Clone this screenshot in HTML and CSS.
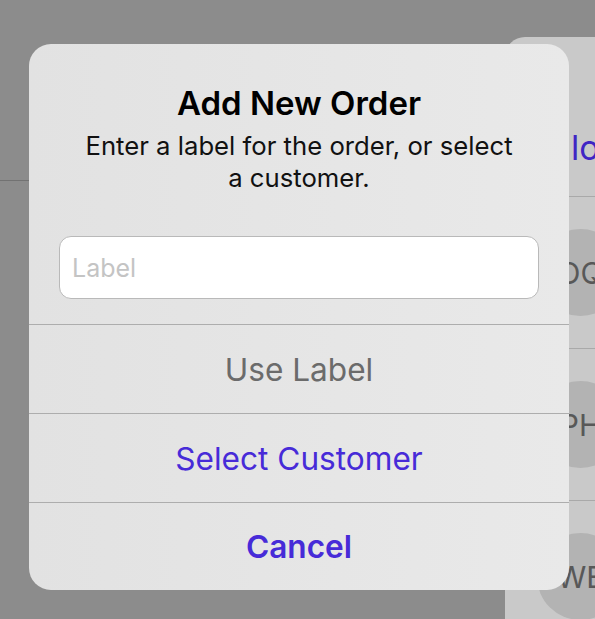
FILE: index.html
```html
<!DOCTYPE html>
<html lang="en">
<head>
  <meta charset="UTF-8" />
  <meta name="viewport" content="width=device-width, initial-scale=1.0"/>
  <title>Add New Order</title>
  <link rel="stylesheet" href="styles.css">
</head>
<body>

  <div class="page">
    <div class="main">
      <div class="main-header"></div>
    </div>

    <div class="side">
      <div class="side-header"><span class="side-title">lo</span></div>
      <div class="side-row"><span class="avatar">OQ</span></div>
      <div class="side-row"><span class="avatar">PH</span></div>
      <div class="side-row"><span class="avatar">WE</span></div>
    </div>
  </div>

  <div class="alert">
    <div class="alert-body">
      <h1 class="alert-title">Add New Order</h1>
      <p class="alert-message">Enter a label for the order, or select a customer.</p>
      <input class="alert-field" type="text" placeholder="Label">
    </div>
    <button class="alert-btn muted">Use Label</button>
    <button class="alert-btn">Select Customer</button>
    <button class="alert-btn bold">Cancel</button>
  </div>

</body>
</html>
```

FILE: styles.css
```css
body { margin: 0; width: 595px; height: 619px; overflow: hidden; background: #8c8c8c; font-family: Inter, "Noto Sans", sans-serif; position: relative; }

.page { display: grid; grid-template-columns: 505px 1fr; height: 619px; overflow: hidden; }
.main-header { height: 180px; border-bottom: 1px solid #727272; }

.side { margin-top: 37px; background: #c9c9c9; border-top-left-radius: 20px; overflow: hidden; }
.side-header { height: 159px; border-bottom: 1px solid #a9a9a9; display: flex; align-items: center; padding-left: 66px; }
.side-title { color: #3f25c4; font-size: 34px; margin-top: 62px; }
.side-row { height: 151px; border-bottom: 1px solid #a9a9a9; display: flex; align-items: center; padding-left: 32px; }
.avatar { width: 87px; height: 87px; border-radius: 50%; background: #b3b3b3; color: #585858; font-size: 30px; display: flex; align-items: center; justify-content: center; flex-shrink: 0; }

.alert { position: absolute; left: 29px; top: 44px; width: 540px; height: 546px; border-radius: 22px; background: linear-gradient(90deg, #e2e2e2, #e9e9e9); display: flex; flex-direction: column; overflow: hidden; }
.alert-body { padding: 40px 30px 25px; text-align: center; border-bottom: 1px solid #adadad; }
.alert-title { margin: 0; font-size: 33px; line-height: 38px; font-weight: 600; color: #000; }
.alert-message { margin: 8px 22px 0; font-size: 25.7px; line-height: 32px; color: #111; }
.alert-field { display: block; box-sizing: border-box; width: 480px; height: 63px; margin-top: 42px; padding: 0 12px; border: 1px solid #b9b9b9; border-radius: 12px; background: #fff; font-family: inherit; font-size: 25px; outline: none; }
.alert-field::placeholder { color: #c4c4c4; }

.alert-btn { height: 89px; flex-shrink: 0; border: 0; border-bottom: 1px solid #adadad; background: transparent; font-family: inherit; font-size: 31.6px; color: #472bd8; padding: 0; }
.alert-btn:last-child { border-bottom: 0; flex: 1; }
.alert-btn.muted { color: #6b6b6b; }
.alert-btn.bold { font-weight: 600; }
```
